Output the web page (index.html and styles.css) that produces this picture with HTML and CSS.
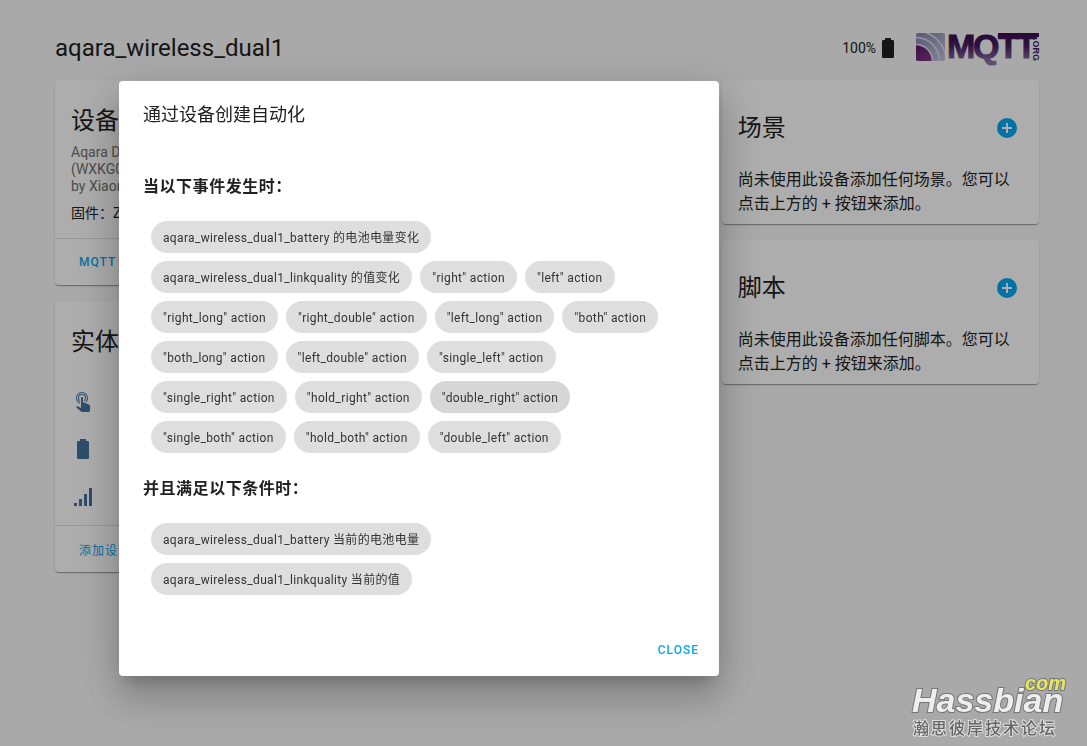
FILE: index.html
```html
<!DOCTYPE html>
<html lang="zh-CN">
<head>
<meta charset="utf-8">
<meta name="viewport" content="width=device-width, initial-scale=1">
<title>aqara_wireless_dual1</title>
<link rel="stylesheet" href="styles.css">
</head>
<body>
<div class="page">
  <header class="page-header">
    <h1 class="page-title">aqara_wireless_dual1</h1>
    <div class="battery">
      <span>100%</span>
      <svg class="icon" viewBox="0 0 24 24"><path d="M16.67,4H15V2H9V4H7.33A1.33,1.33 0 0,0 6,5.33V20.67C6,21.4 6.6,22 7.33,22H16.67A1.33,1.33 0 0,0 18,20.67V5.33C18,4.6 17.4,4 16.67,4Z"/></svg>
    </div>
    <svg class="logo" viewBox="0 0 123 32" role="img" aria-label="MQTT.ORG">
      <defs>
        <linearGradient id="word" gradientUnits="userSpaceOnUse" x1="0" y1="0" x2="0" y2="30">
          <stop offset="0" stop-color="#3a0a52"/><stop offset=".45" stop-color="#431b5e"/><stop offset="1" stop-color="#8d70a4"/>
        </linearGradient>
        <linearGradient id="tile" x1="0" y1="0" x2="1" y2="1">
          <stop offset="0" stop-color="#8682b0"/><stop offset="1" stop-color="#c4c4dc"/>
        </linearGradient>
        <linearGradient id="core" x1="0" y1="0" x2="1" y2="1">
          <stop offset="0" stop-color="#560858"/><stop offset="1" stop-color="#8d4a96"/>
        </linearGradient>
        <clipPath id="square"><rect x="0" y="1" width="29" height="28" rx="2"/></clipPath>
      </defs>
      <g clip-path="url(#square)">
        <rect y="1" width="29" height="29" fill="url(#tile)"/>
        <g fill="none" stroke="#dcdcec" stroke-width="1.6">
          <circle cx="0" cy="29" r="16.5"/><circle cx="0" cy="29" r="23.5"/><circle cx="0" cy="29" r="30"/>
        </g>
        <circle cx="0" cy="29" r="15.5" fill="url(#core)"/>
      </g>
      <rect x="82" y="1" width="41" height="4" fill="url(#word)"/>
      <text class="logo-word" x="31 57 82 100" y="26">MQTT</text>
      <text class="logo-org" transform="translate(117 6) rotate(90)" x="0" y="0">.ORG</text>
    </svg>
  </header>

  <main class="columns">
    <div class="column">
      <section class="card">
        <div class="card-body">
          <h2 class="card-title">设备</h2>
          <p class="model">Aqara D<br>(WXKG0<br>by Xiaom</p>
          <p class="firmware">固件：Z</p>
        </div>
        <div class="card-actions"><button class="text-button" type="button">MQTT</button></div>
      </section>
      <section class="card">
        <div class="card-body entities">
          <h2 class="card-title">实体</h2>
          <ul class="entity-list">
            <li><svg class="icon" viewBox="0 0 24 24"><path d="M10,9A1,1 0 0,1 11,8A1,1 0 0,1 12,9V13.47L13.21,13.6L18.15,15.79C18.68,16.03 19,16.56 19,17.14V21.5C18.97,22.32 18.32,22.97 17.5,23H11C10.62,23 10.26,22.85 10,22.57L5.1,18.37L5.84,17.6C6.03,17.39 6.3,17.28 6.58,17.28H6.8L10,19V9M11,5A4,4 0 0,1 15,9C15,10.5 14.2,11.77 13,12.46V11.24C13.61,10.69 14,9.89 14,9A3,3 0 0,0 11,6A3,3 0 0,0 8,9C8,9.89 8.39,10.69 9,11.24V12.46C7.8,11.77 7,10.5 7,9A4,4 0 0,1 11,5M11,3A6,6 0 0,1 17,9C17,10.7 16.29,12.23 15.16,13.33L14.16,12.88C15.28,11.96 16,10.56 16,9A5,5 0 0,0 11,4A5,5 0 0,0 6,9C6,11.05 7.23,12.81 9,13.58V14.66C6.67,13.83 5,11.61 5,9A6,6 0 0,1 11,3Z"/></svg></li>
            <li><svg class="icon" viewBox="0 0 24 24"><path d="M16.67,4H15V2H9V4H7.33A1.33,1.33 0 0,0 6,5.33V20.67C6,21.4 6.6,22 7.33,22H16.67A1.33,1.33 0 0,0 18,20.67V5.33C18,4.6 17.4,4 16.67,4Z"/></svg></li>
            <li><svg class="icon" viewBox="0 0 24 24"><path d="M3,21H6V18H3M8,21H11V14H8M13,21H16V9H13M18,21H21V3H18V21Z"/></svg></li>
          </ul>
        </div>
        <div class="card-actions"><button class="text-button text-button-regular" type="button">添加设</button></div>
      </section>
    </div>

    <div class="column"></div>

    <div class="column">
      <section class="card">
        <div class="card-header">
          <h2 class="card-title">场景</h2>
          <button class="icon-button" type="button" aria-label="添加场景"><svg class="icon" viewBox="0 0 24 24"><path d="M17,13H13V17H11V13H7V11H11V7H13V11H17M12,2A10,10 0 0,0 2,12A10,10 0 0,0 12,22A10,10 0 0,0 22,12A10,10 0 0,0 12,2Z"/></svg></button>
        </div>
        <p class="card-text">尚未使用此设备添加任何场景。您可以点击上方的 + 按钮来添加。</p>
      </section>
      <section class="card">
        <div class="card-header">
          <h2 class="card-title">脚本</h2>
          <button class="icon-button" type="button" aria-label="添加脚本"><svg class="icon" viewBox="0 0 24 24"><path d="M17,13H13V17H11V13H7V11H11V7H13V11H17M12,2A10,10 0 0,0 2,12A10,10 0 0,0 12,22A10,10 0 0,0 22,12A10,10 0 0,0 12,2Z"/></svg></button>
        </div>
        <p class="card-text">尚未使用此设备添加任何脚本。您可以点击上方的 + 按钮来添加。</p>
      </section>
    </div>
  </main>
</div>

<div class="scrim">
  <div class="dialog" role="dialog" aria-modal="true" aria-labelledby="dialog-title">
    <h2 class="dialog-title" id="dialog-title">通过设备创建自动化</h2>
    <div class="dialog-content">
      <h3 class="group-title">当以下事件发生时：</h3>
      <div class="chips">
        <button class="chip" type="button">aqara_wireless_dual1_battery 的电池电量变化</button>
        <button class="chip" type="button">aqara_wireless_dual1_linkquality 的值变化</button>
        <button class="chip" type="button">"right" action</button>
        <button class="chip" type="button">"left" action</button>
        <button class="chip" type="button">"right_long" action</button>
        <button class="chip" type="button">"right_double" action</button>
        <button class="chip" type="button">"left_long" action</button>
        <button class="chip" type="button">"both" action</button>
        <button class="chip" type="button">"both_long" action</button>
        <button class="chip" type="button">"left_double" action</button>
        <button class="chip" type="button">"single_left" action</button>
        <button class="chip" type="button">"single_right" action</button>
        <button class="chip" type="button">"hold_right" action</button>
        <button class="chip chip-hover" type="button">"double_right" action</button>
        <button class="chip" type="button">"single_both" action</button>
        <button class="chip" type="button">"hold_both" action</button>
        <button class="chip" type="button">"double_left" action</button>
      </div>
      <h3 class="group-title">并且满足以下条件时：</h3>
      <div class="chips">
        <button class="chip" type="button">aqara_wireless_dual1_battery 当前的电池电量</button>
        <button class="chip" type="button">aqara_wireless_dual1_linkquality 当前的值</button>
      </div>
    </div>
    <div class="dialog-actions"><button class="text-button" type="button">CLOSE</button></div>
  </div>
</div>

<div class="watermark">
  <span class="watermark-com">com</span>
  <span class="watermark-name">Hassbian</span>
  <span class="watermark-sub">瀚思彼岸技术论坛</span>
</div>
</body>
</html>
```
FILE: styles.css
```css
* { box-sizing: border-box; }

body {
  margin: 0;
  background: #fafafa;
  color: #212121;
  font-family: Roboto, "Noto Sans CJK SC", sans-serif;
  font-size: 14px;
}

h1, h2, h3, p, ul { margin: 0; padding: 0; }

button {
  border: 0;
  background: none;
  font-family: inherit;
  cursor: pointer;
}

.icon { display: block; width: 24px; height: 24px; fill: currentColor; }

.page { min-height: 100vh; padding: 16px 48px 16px 55px; }

.page-header { display: flex; align-items: center; height: 64px; }
.page-title { flex: 1; font-size: 24px; font-weight: 400; line-height: 32px; }
.battery { display: flex; align-items: center; margin-right: 16px; }
.logo { display: block; width: 123px; height: 32px; overflow: visible; }
.logo-word {
  font-family: "Liberation Sans", sans-serif;
  font-weight: 700;
  font-size: 34px;
  fill: url(#word);
  stroke: url(#word);
  stroke-width: 1px;
}
.logo-org { font-family: "Liberation Sans", sans-serif; font-weight: 700; font-size: 9px; fill: #4b2466; }

.columns { display: grid; grid-template-columns: repeat(3, 1fr); gap: 16px; }
.column { display: flex; flex-direction: column; gap: 16px; min-width: 0; }

.card {
  background: #fff;
  border-radius: 4px;
  box-shadow: 0 2px 1px -1px rgba(0,0,0,.2), 0 1px 1px rgba(0,0,0,.14), 0 1px 3px rgba(0,0,0,.12);
}
.card-body { padding: 24px 16px 16px; }
.card-title { font-size: 24px; font-weight: 400; line-height: 34px; }
.model { margin-top: 6px; line-height: 17px; color: #727272; }
.firmware { margin-top: 10px; line-height: 17px; }
.card-actions { display: flex; align-items: center; height: 47px; padding: 0 16px; border-top: 1px solid rgba(0,0,0,.12); }
.entities { padding-bottom: 4px; }
.entity-list { margin-top: 18px; list-style: none; color: #44739e; }
.entity-list li { display: flex; align-items: center; height: 48px; }

.card-header { display: flex; align-items: center; justify-content: space-between; padding: 24px 8px 16px 16px; }
.card-text { padding: 0 16px 8px; font-size: 16px; line-height: 24px; }
.icon-button { padding: 12px; color: #03a9f4; }

.text-button {
  height: 32px;
  padding: 0 8px;
  color: #03a9f4;
  font-size: 12px;
  font-weight: 500;
  letter-spacing: 1px;
}
.text-button-regular { font-weight: 400; }

.scrim { position: fixed; inset: 0; padding: 81px 119px 0; background: rgba(0,0,0,.32); }
.dialog {
  max-width: 600px;
  background: #fff;
  border-radius: 4px;
  box-shadow: 0 11px 15px -7px rgba(0,0,0,.2), 0 24px 38px 3px rgba(0,0,0,.14), 0 9px 46px 8px rgba(0,0,0,.12);
}
.dialog-title { padding: 20px 24px 22px; font-size: 18px; font-weight: 400; line-height: 28px; }
.dialog-content { padding: 0 24px 29px; }
.group-title { padding: 24px 0 22px; font-size: 16px; font-weight: 700; line-height: 24px; letter-spacing: .0333em; }
.chips { display: flex; flex-wrap: wrap; gap: 8px; padding: 0 8px; }
.chip {
  height: 32px;
  padding: 2px 12px 0;
  border-radius: 16px;
  background: #dedede;
  color: #333;
  font-size: 12px;
  line-height: 20px;
  letter-spacing: .028em;
}
.chip-hover { background: #d6d6d6; }
.dialog-actions { display: flex; align-items: center; justify-content: flex-end; height: 52px; padding: 0 12px; }

.watermark {
  position: fixed;
  right: 21px;
  bottom: 7px;
  display: flex;
  flex-direction: column;
  width: 154px;
  font-family: "Liberation Sans", "Noto Sans CJK SC", sans-serif;
  paint-order: stroke fill;
}
.watermark-com {
  align-self: flex-end;
  color: #e6e664;
  font-size: 20px;
  font-style: italic;
  font-weight: 700;
  line-height: 16px;
  -webkit-text-stroke: 2px #777;
}
.watermark-name {
  color: #eee;
  font-size: 34px;
  font-style: italic;
  font-weight: 700;
  line-height: 18px;
  -webkit-text-stroke: 2px #777;
}
.watermark-sub {
  margin-top: 10px;
  padding-left: 1px;
  color: #666;
  font-size: 16px;
  font-weight: 500;
  letter-spacing: 2px;
  line-height: 20px;
  -webkit-text-stroke: 2px #ddd;
}
```
